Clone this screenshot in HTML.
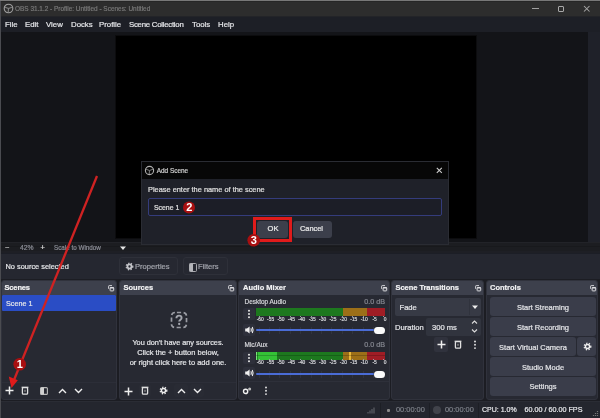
<!DOCTYPE html>
<html><head><meta charset="utf-8">
<style>
*{margin:0;padding:0;box-sizing:border-box}
html,body{width:600px;height:418px;overflow:hidden;background:#17181d;font-family:"Liberation Sans",sans-serif;color:#e6e7ea}
#w{position:absolute;left:0;top:0;width:600px;height:418px;will-change:transform}
.a{position:absolute}
.t{position:absolute;white-space:nowrap;line-height:1;-webkit-text-stroke-width:0.2px}
.panel{position:absolute;background:#272932;border:1px solid #30323c;border-radius:3px;overflow:hidden}
.hdr{position:absolute;left:-1px;top:-1px;right:-1px;height:15px;background:#3d404c}
.hb{font-weight:bold;font-size:7.5px;color:#f2f2f4}
.btn{position:absolute;background:#3a3d4a;border-radius:3px}
.ct{position:absolute;-webkit-text-stroke-width:0.2px;text-align:center;font-size:7.5px;line-height:1;color:#e4e5e8;white-space:nowrap}
.sm{font-size:7.4px}
</style></head><body><div id="w">
<!-- title bar -->
<div class="a" style="left:0;top:0;width:600px;height:16px;background:#2d2d2d;border-top:1px solid #787878"></div>
<div class="a" style="left:0;top:1px;width:600px;height:1px;background:#262626"></div>
<svg class="a" style="left:3.1px;top:3px" width="11" height="11" viewBox="0 0 11 11"><circle cx="5.5" cy="5.5" r="4.3" fill="none" stroke="#a0a0a0" stroke-width="1.1"/><path d="M5.5 5.5L2.12 4.27 M5.5 5.5L8.88 4.27 M5.5 5.5L5.19 9.09" stroke="#a0a0a0" stroke-width="1.1" opacity="0.75"/></svg>
<div class="t" style="left:15px;top:5.6px;font-size:6.45px;color:#777777">OBS 31.1.2 - Profile: Untitled - Scenes: Untitled</div>
<div class="a" style="left:532px;top:7.6px;width:6.5px;height:1.1px;background:#a0a0a0"></div>
<div class="a" style="left:557.5px;top:5.5px;width:6.5px;height:6.5px;border:1.7px solid #a8a8a8;border-radius:1px"></div>
<svg class="a" style="left:583px;top:4.6px" width="7.5" height="7.5"><path d="M1 1L6.5 6.5M6.5 1L1 6.5" stroke="#a8a8a8" stroke-width="1.05"/></svg>

<!-- menu bar -->
<div class="a" style="left:0;top:16px;width:600px;height:16px;background:#1d1f26;border-top:1px solid #232428"></div>
<div class="t" style="left:5px;top:20.5px;font-size:7.8px">File</div>
<div class="t" style="left:25px;top:20.5px;font-size:7.8px">Edit</div>
<div class="t" style="left:46px;top:20.5px;font-size:7.8px">View</div>
<div class="t" style="left:71px;top:20.5px;font-size:7.8px">Docks</div>
<div class="t" style="left:99px;top:20.5px;font-size:7.8px">Profile</div>
<div class="t" style="left:129px;top:20.5px;font-size:7.8px;letter-spacing:-0.25px">Scene Collection</div>
<div class="t" style="left:192px;top:20.5px;font-size:7.8px">Tools</div>
<div class="t" style="left:218px;top:20.5px;font-size:7.8px">Help</div>

<!-- preview area -->
<div class="a" style="left:1px;top:32px;width:587px;height:210px;background:#131418"></div>
<div class="a" style="left:588px;top:32px;width:12px;height:210px;background:#1f2129"></div>
<div class="a" style="left:115px;top:35px;width:362px;height:204px;background:#0c0c0e"></div>
<div class="a" style="left:116px;top:36px;width:360px;height:202px;background:#000"></div>
<!-- left window border -->
<div class="a" style="left:0;top:1px;width:1px;height:417px;background:#4a4b50"></div>

<!-- zoom bar -->
<div class="a" style="left:1px;top:242px;width:599px;height:12px;background:#1c1d21;border-top:1px solid #222328"></div><div class="a" style="left:1px;top:246px;width:599px;height:1px;background:#18191c"></div><div class="a" style="left:1px;top:251px;width:599px;height:2px;background:#1e1f25"></div>
<div class="t" style="left:5px;top:244px;font-size:7.5px;color:#e0e0e0">−</div>
<div class="t" style="left:20px;top:245px;font-size:6.8px;color:#8a8c95">42%</div>
<div class="t" style="left:40.5px;top:244px;font-size:7.5px;color:#e0e0e0">+</div>
<div class="t" style="left:54px;top:245px;font-size:6.3px;color:#8a8c95">Scale to Window</div>
<svg class="a" style="left:119.5px;top:246px" width="6" height="5"><path d="M0 0.5H6L3 4Z" fill="#e6e6e6"/></svg>

<!-- properties bar -->
<div class="a" style="left:1px;top:253px;width:599px;height:26px;background:#252730;border-top:1px solid #1c1e26"></div>
<div class="t" style="left:5.5px;top:263px;font-size:7.4px">No source selected</div>
<div class="a" style="left:119px;top:256.5px;width:59px;height:18.5px;border:1px solid #2e3039;border-radius:3px;background:#262831"></div>
<svg class="a" style="left:125px;top:262px" width="9" height="9" viewBox="0 0 9 9"><circle cx="4.5" cy="4.5" r="3.3" fill="none" stroke="#c4c5ca" stroke-width="1.3" stroke-dasharray="1.3 1.45"/><circle cx="4.5" cy="4.5" r="2.9" fill="#c4c5ca"/><circle cx="4.5" cy="4.5" r="1.15" fill="#262831"/></svg>
<div class="t" style="left:135px;top:263px;font-size:7.6px;color:#a3a5ad">Properties</div>
<div class="a" style="left:182.5px;top:256.5px;width:45px;height:18.5px;border:1px solid #2e3039;border-radius:3px;background:#262831"></div>
<svg class="a" style="left:189px;top:262.5px" width="8" height="9"><rect x="0.5" y="0.5" width="7" height="8" rx="1" fill="none" stroke="#a8a9ae"/><rect x="0.5" y="0.5" width="3.5" height="8" fill="#b4b5ba"/></svg>
<div class="t" style="left:198px;top:263px;font-size:7.6px;color:#a3a5ad">Filters</div>

<!-- dock background -->
<div class="a" style="left:1px;top:279px;width:599px;height:122px;background:#1c1d23"></div>

<!-- Scenes -->
<div class="panel" style="left:1px;top:280px;width:116px;height:119.5px">
  <div class="hdr"></div>
</div>
<div class="t hb" style="left:4.5px;top:284px;letter-spacing:-0.15px">Scenes</div>
<svg class="a" style="left:108px;top:284.5px" width="7" height="7"><path d="M0.6 3.8V1.2Q0.6 0.6 1.2 0.6H4" fill="none" stroke="#d0d0d4" stroke-width="1"/><rect x="2.1" y="2.5" width="3.6" height="3.4" rx="0.6" fill="none" stroke="#dcdce0" stroke-width="1"/><rect x="2" y="2.3" width="3.8" height="1.2" fill="#dcdce0"/></svg>
<div class="a" style="left:2px;top:295px;width:113.5px;height:16px;background:#2a4dc5;border-radius:1px"></div>
<div class="t" style="left:6px;top:299.5px;font-size:7.2px">Scene 1</div>
<div class="a" style="left:2px;top:382px;width:114px;height:1px;background:#2c2e38"></div>
<!-- scenes toolbar -->
<svg class="a" style="left:5px;top:386px" width="9" height="9"><path d="M4.5 0.5V8.5M0.5 4.5H8.5" stroke="#eee" stroke-width="1.5"/></svg>
<svg class="a" style="left:21px;top:386px" width="8" height="9"><path d="M0.6 1.3H7.4" stroke="#e0e0e0" stroke-width="1.3"/><rect x="1.4" y="1.6" width="5.2" height="6.6" rx="1" fill="none" stroke="#e0e0e0" stroke-width="1.3"/><rect x="3.4" y="3.8" width="1.2" height="2" fill="#999"/></svg>
<svg class="a" style="left:40px;top:387px" width="8" height="8"><rect x="0.6" y="0.6" width="6.8" height="6.8" rx="1" fill="none" stroke="#bbb" stroke-width="1.1"/><rect x="0.6" y="0.6" width="3.4" height="6.8" fill="#d0d0d0"/></svg>
<svg class="a" style="left:58px;top:388px" width="9" height="6"><path d="M1 5L4.5 1.5L8 5" fill="none" stroke="#eee" stroke-width="1.4"/></svg>
<svg class="a" style="left:73.6px;top:388px" width="9" height="6"><path d="M1 1L4.5 4.5L8 1" fill="none" stroke="#eee" stroke-width="1.4"/></svg>

<!-- Sources -->
<div class="panel" style="left:119px;top:280px;width:118px;height:119.5px">
  <div class="hdr"></div>
</div>
<div class="t hb" style="left:123.5px;top:284px">Sources</div>
<svg class="a" style="left:227.5px;top:284.5px" width="7" height="7"><path d="M0.6 3.8V1.2Q0.6 0.6 1.2 0.6H4" fill="none" stroke="#d0d0d4" stroke-width="1"/><rect x="2.1" y="2.5" width="3.6" height="3.4" rx="0.6" fill="none" stroke="#dcdce0" stroke-width="1"/><rect x="2" y="2.3" width="3.8" height="1.2" fill="#dcdce0"/></svg>
<svg class="a" style="left:170px;top:311px" width="18" height="18" viewBox="0 0 18 18"><rect x="1.5" y="1.5" width="15" height="15" rx="3.5" fill="none" stroke="#9a9ca4" stroke-width="1.7" stroke-dasharray="4.2 2.55" stroke-dashoffset="4.85"/><path d="M6.4 7.2C6.4 5.6 7.6 4.6 9 4.6C10.5 4.6 11.6 5.6 11.6 6.9C11.6 8.6 9.2 8.7 9.2 10.6" fill="none" stroke="#a4a6ae" stroke-width="1.9"/><circle cx="9.2" cy="13" r="1.15" fill="#a4a6ae"/></svg>
<div class="ct" style="left:119px;width:118px;top:339px;font-size:7.3px">You don't have any sources.</div>
<div class="ct" style="left:119px;width:118px;top:349px">Click the + button below,</div>
<div class="ct" style="left:119px;width:118px;top:359px">or right click here to add one.</div>
<div class="a" style="left:120px;top:382px;width:116px;height:1px;background:#2c2e38"></div>
<svg class="a" style="left:124px;top:387px" width="9" height="9"><path d="M4.5 0.5V8.5M0.5 4.5H8.5" stroke="#eee" stroke-width="1.5"/></svg>
<div class="a" style="left:139px;top:384px;width:12px;height:13px;background:#292b34;border-radius:2px"></div>
<svg class="a" style="left:141px;top:386px" width="8" height="9"><path d="M0.6 1.3H7.4" stroke="#e0e0e0" stroke-width="1.3"/><rect x="1.4" y="1.6" width="5.2" height="6.6" rx="1" fill="none" stroke="#e0e0e0" stroke-width="1.3"/><rect x="3.4" y="3.8" width="1.2" height="2" fill="#999"/></svg>
<svg class="a" style="left:158.5px;top:386px" width="9" height="9" viewBox="0 0 9 9"><circle cx="4.5" cy="4.5" r="3.3" fill="none" stroke="#efefef" stroke-width="1.3" stroke-dasharray="1.3 1.45"/><circle cx="4.5" cy="4.5" r="2.8" fill="#efefef"/><circle cx="4.5" cy="4.5" r="1.3" fill="#272932"/></svg>
<div class="a" style="left:174px;top:384px;width:14px;height:13px;background:#292b34;border-radius:2px"></div>
<svg class="a" style="left:177px;top:388px" width="9" height="6"><path d="M1 5L4.5 1.5L8 5" fill="none" stroke="#eee" stroke-width="1.4"/></svg>
<div class="a" style="left:190px;top:384px;width:14px;height:13px;background:#292b34;border-radius:2px"></div>
<svg class="a" style="left:193px;top:388px" width="9" height="6"><path d="M1 1L4.5 4.5L8 1" fill="none" stroke="#eee" stroke-width="1.4"/></svg>

<!-- Audio Mixer -->
<div class="panel" style="left:238px;top:280px;width:152px;height:119.5px">
  <div class="hdr"></div>
</div>
<div class="t hb" style="left:243px;top:284px">Audio Mixer</div>
<svg class="a" style="left:380.5px;top:284.5px" width="7" height="7"><path d="M0.6 3.8V1.2Q0.6 0.6 1.2 0.6H4" fill="none" stroke="#d0d0d4" stroke-width="1"/><rect x="2.1" y="2.5" width="3.6" height="3.4" rx="0.6" fill="none" stroke="#dcdce0" stroke-width="1"/><rect x="2" y="2.3" width="3.8" height="1.2" fill="#dcdce0"/></svg>

<!-- mixer content -->
<div class="t" style="left:244.5px;top:298.5px;font-size:6.45px;color:#d6d7db">Desktop Audio</div>
<div class="t" style="left:345px;width:40px;text-align:right;top:298px;font-size:7.2px;color:#868891">0.0 dB</div>
<div class="a" style="left:243px;top:308px;width:12px;height:12px;background:#2e303b;border-radius:2px"></div>
<svg class="a" style="left:247px;top:309px" width="4" height="10"><circle cx="2" cy="1.8" r="1" fill="#e6e6e6"/><circle cx="2" cy="5" r="1" fill="#e6e6e6"/><circle cx="2" cy="8.2" r="1" fill="#e6e6e6"/></svg>
<div class="a" style="left:256px;top:307.5px;width:87px;height:8.5px;background:#1d781e"></div>
<div class="a" style="left:343px;top:307.5px;width:24px;height:8.5px;background:#9c6f18"></div>
<div class="a" style="left:367px;top:307.5px;width:18px;height:8.5px;background:#a01d25"></div>

<div class="a" style="left:243px;top:324px;width:12px;height:12px;background:#2e303b;border-radius:2px"></div>
<svg class="a" style="left:244px;top:325px" width="11" height="10" viewBox="0 0 11 10"><path d="M1.2 3.6H3L5.6 1.4V8.6L3 6.4H1.2Z" fill="#f0f0f0"/><path d="M6.9 3.3Q7.8 5 6.9 6.7M8.3 2.1Q9.8 5 8.3 7.9" fill="none" stroke="#f0f0f0" stroke-width="1.1"/></svg>
<div class="a" style="left:256px;top:329.3px;width:118px;height:2.2px;background:#4a6cd6;border-radius:1px;z-index:1"></div>
<div class="a" style="left:373.5px;top:327px;width:11.5px;height:6.5px;background:#fafafa;border-radius:3.5px;z-index:1"></div>
<div class="t" style="left:244.5px;top:341.5px;font-size:6.5px;color:#d6d7db">Mic/Aux</div>
<div class="t" style="left:345px;width:40px;text-align:right;top:341px;font-size:7.2px;color:#868891">0.0 dB</div>
<div class="a" style="left:243px;top:352px;width:12px;height:12px;background:#2e303b;border-radius:2px"></div>
<svg class="a" style="left:247px;top:353px" width="4" height="10"><circle cx="2" cy="1.8" r="1" fill="#e6e6e6"/><circle cx="2" cy="5" r="1" fill="#e6e6e6"/><circle cx="2" cy="8.2" r="1" fill="#e6e6e6"/></svg>
<div class="a" style="left:256px;top:351.5px;width:87px;height:8px;background:#1d781e"></div>
<div class="a" style="left:256px;top:351.5px;width:21px;height:8px;background:#34c236"></div>
<div class="a" style="left:256.2px;top:351.5px;width:1.1px;height:8px;background:#7ee07e"></div><div class="a" style="left:257.4px;top:351.5px;width:0.9px;height:8px;background:#1f8a22"></div>
<div class="a" style="left:343px;top:351.5px;width:24px;height:8px;background:#9c6f18"></div>
<div class="a" style="left:348.5px;top:351.5px;width:2px;height:8px;background:#e8b838"></div>
<div class="a" style="left:367px;top:351.5px;width:18px;height:8px;background:#a01d25"></div>
<div class="a" style="left:256px;top:355.3px;width:129px;height:0.6px;background:rgba(0,0,0,0.2)"></div>
<div class="a" style="left:243px;top:367px;width:12px;height:12px;background:#2e303b;border-radius:2px"></div>
<svg class="a" style="left:244px;top:368px" width="11" height="10" viewBox="0 0 11 10"><path d="M1.2 3.6H3L5.6 1.4V8.6L3 6.4H1.2Z" fill="#f0f0f0"/><path d="M6.9 3.3Q7.8 5 6.9 6.7M8.3 2.1Q9.8 5 8.3 7.9" fill="none" stroke="#f0f0f0" stroke-width="1.1"/></svg>
<div class="a" style="left:256px;top:373.3px;width:118px;height:2.2px;background:#4a6cd6;border-radius:1px;z-index:1"></div>
<div class="a" style="left:373.5px;top:371.2px;width:11.5px;height:6.5px;background:#fafafa;border-radius:3.5px;z-index:1"></div>
<div class="a" style="left:239px;top:381px;width:150px;height:1px;background:#2e303a"></div>
<svg class="a" style="left:242px;top:386px" width="10" height="9" viewBox="0 0 10 9"><circle cx="3.6" cy="5.4" r="2.1" fill="none" stroke="#f2f2f2" stroke-width="1.4"/><circle cx="7.6" cy="3" r="1.5" fill="#bbb"/></svg>
<svg class="a" style="left:264px;top:386px" width="4" height="10"><circle cx="2" cy="1.5" r="0.95" fill="#e6e6e6"/><circle cx="2" cy="4.8" r="0.95" fill="#e6e6e6"/><circle cx="2" cy="8.1" r="0.95" fill="#e6e6e6"/></svg>
<div class="t" style="left:250.2px;width:20px;text-align:center;top:317.8px;font-size:4.9px;color:#d4d5d9">-60</div>
<div class="a" style="left:258.5px;top:315.5px;width:1px;height:1.5px;background:#9a9ca3"></div>
<div class="a" style="left:258.5px;top:327.2px;width:1px;height:7px;background:#30333e"></div>
<div class="t" style="left:260.6px;width:20px;text-align:center;top:317.8px;font-size:4.9px;color:#d4d5d9">-55</div>
<div class="a" style="left:268.9px;top:315.5px;width:1px;height:1.5px;background:#9a9ca3"></div>
<div class="a" style="left:268.9px;top:327.2px;width:1px;height:7px;background:#30333e"></div>
<div class="t" style="left:271.0px;width:20px;text-align:center;top:317.8px;font-size:4.9px;color:#d4d5d9">-50</div>
<div class="a" style="left:279.3px;top:315.5px;width:1px;height:1.5px;background:#9a9ca3"></div>
<div class="a" style="left:279.3px;top:327.2px;width:1px;height:7px;background:#30333e"></div>
<div class="t" style="left:281.4px;width:20px;text-align:center;top:317.8px;font-size:4.9px;color:#d4d5d9">-45</div>
<div class="a" style="left:289.7px;top:315.5px;width:1px;height:1.5px;background:#9a9ca3"></div>
<div class="a" style="left:289.7px;top:327.2px;width:1px;height:7px;background:#30333e"></div>
<div class="t" style="left:291.8px;width:20px;text-align:center;top:317.8px;font-size:4.9px;color:#d4d5d9">-40</div>
<div class="a" style="left:300.1px;top:315.5px;width:1px;height:1.5px;background:#9a9ca3"></div>
<div class="a" style="left:300.1px;top:327.2px;width:1px;height:7px;background:#30333e"></div>
<div class="t" style="left:302.2px;width:20px;text-align:center;top:317.8px;font-size:4.9px;color:#d4d5d9">-35</div>
<div class="a" style="left:310.5px;top:315.5px;width:1px;height:1.5px;background:#9a9ca3"></div>
<div class="a" style="left:310.5px;top:327.2px;width:1px;height:7px;background:#30333e"></div>
<div class="t" style="left:312.6px;width:20px;text-align:center;top:317.8px;font-size:4.9px;color:#d4d5d9">-30</div>
<div class="a" style="left:320.9px;top:315.5px;width:1px;height:1.5px;background:#9a9ca3"></div>
<div class="a" style="left:320.9px;top:327.2px;width:1px;height:7px;background:#30333e"></div>
<div class="t" style="left:323.0px;width:20px;text-align:center;top:317.8px;font-size:4.9px;color:#d4d5d9">-25</div>
<div class="a" style="left:331.3px;top:315.5px;width:1px;height:1.5px;background:#9a9ca3"></div>
<div class="a" style="left:331.3px;top:327.2px;width:1px;height:7px;background:#30333e"></div>
<div class="t" style="left:333.4px;width:20px;text-align:center;top:317.8px;font-size:4.9px;color:#d4d5d9">-20</div>
<div class="a" style="left:341.7px;top:315.5px;width:1px;height:1.5px;background:#9a9ca3"></div>
<div class="a" style="left:341.7px;top:327.2px;width:1px;height:7px;background:#30333e"></div>
<div class="t" style="left:343.8px;width:20px;text-align:center;top:317.8px;font-size:4.9px;color:#d4d5d9">-15</div>
<div class="a" style="left:352.1px;top:315.5px;width:1px;height:1.5px;background:#9a9ca3"></div>
<div class="a" style="left:352.1px;top:327.2px;width:1px;height:7px;background:#30333e"></div>
<div class="t" style="left:354.2px;width:20px;text-align:center;top:317.8px;font-size:4.9px;color:#d4d5d9">-10</div>
<div class="a" style="left:362.5px;top:315.5px;width:1px;height:1.5px;background:#9a9ca3"></div>
<div class="a" style="left:362.5px;top:327.2px;width:1px;height:7px;background:#30333e"></div>
<div class="t" style="left:364.6px;width:20px;text-align:center;top:317.8px;font-size:4.9px;color:#d4d5d9">-5</div>
<div class="a" style="left:372.9px;top:315.5px;width:1px;height:1.5px;background:#9a9ca3"></div>
<div class="a" style="left:372.9px;top:327.2px;width:1px;height:7px;background:#30333e"></div>
<div class="t" style="left:375.0px;width:20px;text-align:center;top:317.8px;font-size:4.9px;color:#d4d5d9">0</div>
<div class="a" style="left:383.3px;top:315.5px;width:1px;height:1.5px;background:#9a9ca3"></div>
<div class="t" style="left:250.2px;width:20px;text-align:center;top:360.8px;font-size:4.9px;color:#d4d5d9">-60</div>
<div class="a" style="left:258.5px;top:358.5px;width:1px;height:1.5px;background:#9a9ca3"></div>
<div class="a" style="left:258.5px;top:370.5px;width:1px;height:7px;background:#30333e"></div>
<div class="t" style="left:260.6px;width:20px;text-align:center;top:360.8px;font-size:4.9px;color:#d4d5d9">-55</div>
<div class="a" style="left:268.9px;top:358.5px;width:1px;height:1.5px;background:#9a9ca3"></div>
<div class="a" style="left:268.9px;top:370.5px;width:1px;height:7px;background:#30333e"></div>
<div class="t" style="left:271.0px;width:20px;text-align:center;top:360.8px;font-size:4.9px;color:#d4d5d9">-50</div>
<div class="a" style="left:279.3px;top:358.5px;width:1px;height:1.5px;background:#9a9ca3"></div>
<div class="a" style="left:279.3px;top:370.5px;width:1px;height:7px;background:#30333e"></div>
<div class="t" style="left:281.4px;width:20px;text-align:center;top:360.8px;font-size:4.9px;color:#d4d5d9">-45</div>
<div class="a" style="left:289.7px;top:358.5px;width:1px;height:1.5px;background:#9a9ca3"></div>
<div class="a" style="left:289.7px;top:370.5px;width:1px;height:7px;background:#30333e"></div>
<div class="t" style="left:291.8px;width:20px;text-align:center;top:360.8px;font-size:4.9px;color:#d4d5d9">-40</div>
<div class="a" style="left:300.1px;top:358.5px;width:1px;height:1.5px;background:#9a9ca3"></div>
<div class="a" style="left:300.1px;top:370.5px;width:1px;height:7px;background:#30333e"></div>
<div class="t" style="left:302.2px;width:20px;text-align:center;top:360.8px;font-size:4.9px;color:#d4d5d9">-35</div>
<div class="a" style="left:310.5px;top:358.5px;width:1px;height:1.5px;background:#9a9ca3"></div>
<div class="a" style="left:310.5px;top:370.5px;width:1px;height:7px;background:#30333e"></div>
<div class="t" style="left:312.6px;width:20px;text-align:center;top:360.8px;font-size:4.9px;color:#d4d5d9">-30</div>
<div class="a" style="left:320.9px;top:358.5px;width:1px;height:1.5px;background:#9a9ca3"></div>
<div class="a" style="left:320.9px;top:370.5px;width:1px;height:7px;background:#30333e"></div>
<div class="t" style="left:323.0px;width:20px;text-align:center;top:360.8px;font-size:4.9px;color:#d4d5d9">-25</div>
<div class="a" style="left:331.3px;top:358.5px;width:1px;height:1.5px;background:#9a9ca3"></div>
<div class="a" style="left:331.3px;top:370.5px;width:1px;height:7px;background:#30333e"></div>
<div class="t" style="left:333.4px;width:20px;text-align:center;top:360.8px;font-size:4.9px;color:#d4d5d9">-20</div>
<div class="a" style="left:341.7px;top:358.5px;width:1px;height:1.5px;background:#9a9ca3"></div>
<div class="a" style="left:341.7px;top:370.5px;width:1px;height:7px;background:#30333e"></div>
<div class="t" style="left:343.8px;width:20px;text-align:center;top:360.8px;font-size:4.9px;color:#d4d5d9">-15</div>
<div class="a" style="left:352.1px;top:358.5px;width:1px;height:1.5px;background:#9a9ca3"></div>
<div class="a" style="left:352.1px;top:370.5px;width:1px;height:7px;background:#30333e"></div>
<div class="t" style="left:354.2px;width:20px;text-align:center;top:360.8px;font-size:4.9px;color:#d4d5d9">-10</div>
<div class="a" style="left:362.5px;top:358.5px;width:1px;height:1.5px;background:#9a9ca3"></div>
<div class="a" style="left:362.5px;top:370.5px;width:1px;height:7px;background:#30333e"></div>
<div class="t" style="left:364.6px;width:20px;text-align:center;top:360.8px;font-size:4.9px;color:#d4d5d9">-5</div>
<div class="a" style="left:372.9px;top:358.5px;width:1px;height:1.5px;background:#9a9ca3"></div>
<div class="a" style="left:372.9px;top:370.5px;width:1px;height:7px;background:#30333e"></div>
<div class="t" style="left:375.0px;width:20px;text-align:center;top:360.8px;font-size:4.9px;color:#d4d5d9">0</div>
<div class="a" style="left:383.3px;top:358.5px;width:1px;height:1.5px;background:#9a9ca3"></div>

<!-- Scene Transitions -->
<div class="panel" style="left:391px;top:280px;width:93px;height:119.5px">
  <div class="hdr"></div>
</div>
<div class="t hb" style="left:395.5px;top:284px;letter-spacing:-0.05px">Scene Transitions</div>
<svg class="a" style="left:475px;top:284.5px" width="7" height="7"><path d="M0.6 3.8V1.2Q0.6 0.6 1.2 0.6H4" fill="none" stroke="#d0d0d4" stroke-width="1"/><rect x="2.1" y="2.5" width="3.6" height="3.4" rx="0.6" fill="none" stroke="#dcdce0" stroke-width="1"/><rect x="2" y="2.3" width="3.8" height="1.2" fill="#dcdce0"/></svg>

<div class="a" style="left:395px;top:298px;width:86px;height:17.5px;background:#373a45;border-radius:2px"></div>
<div class="a" style="left:469px;top:299px;width:1px;height:15.5px;background:#30333d"></div>
<div class="t" style="left:399.5px;top:303.6px;font-size:7.6px">Fade</div>
<svg class="a" style="left:471.5px;top:305.2px" width="6" height="5"><path d="M0 0.5H6L3 4Z" fill="#eee"/></svg>
<div class="t" style="left:395px;top:323.5px;font-size:7.6px">Duration</div>
<div class="a" style="left:426px;top:318px;width:55px;height:17.5px;background:#31343e;border-radius:2px"></div>
<div class="t" style="left:432px;top:323.5px;font-size:7.6px">300 ms</div>
<svg class="a" style="left:471px;top:319px" width="7" height="16"><path d="M1 4.5L3.5 2L6 4.5M1 10.5L3.5 13L6 10.5" fill="none" stroke="#ddd" stroke-width="1.1"/></svg>
<div class="a" style="left:434px;top:337px;width:14px;height:14.5px;background:#30323d;border-radius:2px"></div>
<svg class="a" style="left:436.5px;top:340px" width="9" height="9"><path d="M4.5 0.5V8.5M0.5 4.5H8.5" stroke="#eee" stroke-width="1.5"/></svg>
<svg class="a" style="left:454px;top:340px" width="8" height="9"><path d="M0.6 1.3H7.4" stroke="#e0e0e0" stroke-width="1.3"/><rect x="1.4" y="1.6" width="5.2" height="6.6" rx="1" fill="none" stroke="#e0e0e0" stroke-width="1.3"/><rect x="3.4" y="3.8" width="1.2" height="2" fill="#999"/></svg>
<svg class="a" style="left:472.5px;top:340px" width="4" height="10"><circle cx="2" cy="1.5" r="0.95" fill="#e6e6e6"/><circle cx="2" cy="4.8" r="0.95" fill="#e6e6e6"/><circle cx="2" cy="8.1" r="0.95" fill="#e6e6e6"/></svg>

<!-- Controls -->
<div class="panel" style="left:486px;top:280px;width:112px;height:119.5px">
  <div class="hdr"></div>
</div>
<div class="t hb" style="left:490px;top:284px">Controls</div>
<svg class="a" style="left:589.5px;top:284.5px" width="7" height="7"><path d="M0.6 3.8V1.2Q0.6 0.6 1.2 0.6H4" fill="none" stroke="#d0d0d4" stroke-width="1"/><rect x="2.1" y="2.5" width="3.6" height="3.4" rx="0.6" fill="none" stroke="#dcdce0" stroke-width="1"/><rect x="2" y="2.3" width="3.8" height="1.2" fill="#dcdce0"/></svg>
<div class="btn" style="left:489.5px;top:297px;width:106.5px;height:18.5px"></div>
<div class="ct" style="left:490px;width:106px;top:303.6px">Start Streaming</div>
<div class="btn" style="left:489.5px;top:317px;width:106.5px;height:18.5px"></div>
<div class="ct" style="left:490px;width:106px;top:323.6px">Start Recording</div>
<div class="btn" style="left:489.5px;top:337px;width:86.7px;height:18.5px"></div>
<div class="ct" style="left:490px;width:86px;top:343.6px">Start Virtual Camera</div>
<div class="btn" style="left:577.2px;top:337px;width:18.8px;height:18.5px"></div>
<svg class="a" style="left:582.6px;top:342.2px" width="9" height="9" viewBox="0 0 9 9"><circle cx="4.5" cy="4.5" r="3.3" fill="none" stroke="#efefef" stroke-width="1.3" stroke-dasharray="1.3 1.45"/><circle cx="4.5" cy="4.5" r="2.8" fill="#efefef"/><circle cx="4.5" cy="4.5" r="1.3" fill="#3a3d4a"/></svg>
<div class="btn" style="left:489.5px;top:357px;width:106.5px;height:18.5px"></div>
<div class="ct" style="left:490px;width:106px;top:363.6px">Studio Mode</div>
<div class="btn" style="left:489.5px;top:377px;width:106.5px;height:18.5px"></div>
<div class="ct" style="left:490px;width:106px;top:382.8px">Settings</div>

<!-- status bar -->
<div class="a" style="left:1px;top:401px;width:599px;height:17px;background:#24262e;border-top:1px solid #2a2c34"></div>
<div class="a" style="left:380px;top:403px;width:1px;height:15px;background:#1d1f25"></div>
<div class="a" style="left:429px;top:403px;width:1px;height:15px;background:#1d1f25"></div>
<div class="a" style="left:478px;top:403px;width:1px;height:15px;background:#1d1f25"></div>
<svg class="a" style="left:367px;top:405px" width="9" height="9"><path d="M1 8.5V7M3 8.5V5.5M5 8.5V4M7 8.5V2.5" stroke="#62646c" stroke-width="1.1"/></svg>
<div class="a" style="left:387px;top:409px;width:2.5px;height:2.5px;background:#8a8a8a;border-radius:1px"></div>
<div class="t" style="left:396px;top:406px;font-size:7.4px;color:#7d8089">00:00:00</div>
<div class="a" style="left:433px;top:406px;width:8px;height:8px;border-radius:50%;background:#41434b"></div>
<div class="t" style="left:445px;top:406px;font-size:7.4px;color:#7d8089">00:00:00</div>
<div class="t" style="left:482px;top:406px;font-size:7.0px">CPU: 1.0%</div>
<div class="t" style="left:524.5px;top:406px;font-size:7.2px">60.00 / 60.00 FPS</div>
<svg class="a" style="left:591px;top:410px" width="8" height="7"><path d="M6.5 1V2M4.5 3V4M6.5 3V4M2.5 5V6M4.5 5V6M6.5 5V6" stroke="#777" stroke-width="1.2"/></svg>

<!-- dialog -->
<div class="a" style="left:141px;top:161px;width:308px;height:84px;background:#1f2129;border:1px solid #2a2c33"></div>
<div class="a" style="left:142px;top:162px;width:306px;height:17px;background:#070707"></div>
<svg class="a" style="left:144.2px;top:164.8px" width="11" height="11" viewBox="0 0 11 11"><circle cx="5.5" cy="5.5" r="4.1" fill="none" stroke="#b0b0b0" stroke-width="1.1"/><path d="M5.5 5.5L2.12 4.27 M5.5 5.5L8.88 4.27 M5.5 5.5L5.19 9.09" stroke="#b0b0b0" stroke-width="1" opacity="0.7"/></svg>
<div class="t" style="left:156.7px;top:167.7px;font-size:6.45px;color:#d0d0d0">Add Scene</div>
<svg class="a" style="left:435.5px;top:167.2px" width="7" height="7"><path d="M0.8 0.8L5.8 5.8M5.8 0.8L0.8 5.8" stroke="#cfcfcf" stroke-width="1.1"/></svg>
<div class="t" style="left:148px;top:185.8px;font-size:7.4px;color:#e0e0e0">Please enter the name of the scene</div>
<div class="a" style="left:148px;top:198px;width:294px;height:18.3px;background:#1c1e27;border:1px solid #343c7c;border-radius:2px"></div>
<div class="t" style="left:154px;top:204.5px;font-size:6.9px;color:#e0e0e0">Scene 1</div>
<div class="btn" style="left:257px;top:221px;width:31px;height:17px;background:#3c3f4b"></div>
<div class="t" style="left:267.5px;top:225.3px;font-size:7.6px;color:#eee">OK</div>
<div class="btn" style="left:293px;top:221px;width:39px;height:17px;background:#3c3f4b"></div>
<div class="t" style="left:300px;top:225.3px;font-size:7.4px;color:#eee">Cancel</div>

<!-- annotations -->
<div class="a" style="left:253px;top:217px;width:39px;height:25px;border:3px solid #e01b1b"></div>
<svg class="a" style="left:0;top:0" width="600" height="418">
  <line x1="97" y1="176" x2="14" y2="380" stroke="#cf2222" stroke-width="2.3"/>
  <path d="M11.5 388L8.8 376.5L17.8 380.3Z" fill="#e01b1b"/>
  <circle cx="19.7" cy="364.3" r="6.3" fill="#a80f10"/>
  <circle cx="189" cy="207.5" r="6" fill="#a80f10"/>
  <circle cx="253.7" cy="240.3" r="6.3" fill="#a80f10"/>
</svg>
<div class="a" style="left:12.9px;top:357.4px;width:14px;height:14px;display:flex;align-items:center;justify-content:center;font-size:11px;line-height:1;font-weight:bold;color:#fff">1</div>
<div class="a" style="left:182.2px;top:200.6px;width:14px;height:14px;display:flex;align-items:center;justify-content:center;font-size:11px;line-height:1;font-weight:bold;color:#fff">2</div>
<div class="a" style="left:246.9px;top:233.4px;width:14px;height:14px;display:flex;align-items:center;justify-content:center;font-size:11px;line-height:1;font-weight:bold;color:#fff">3</div>
</div></body></html>
